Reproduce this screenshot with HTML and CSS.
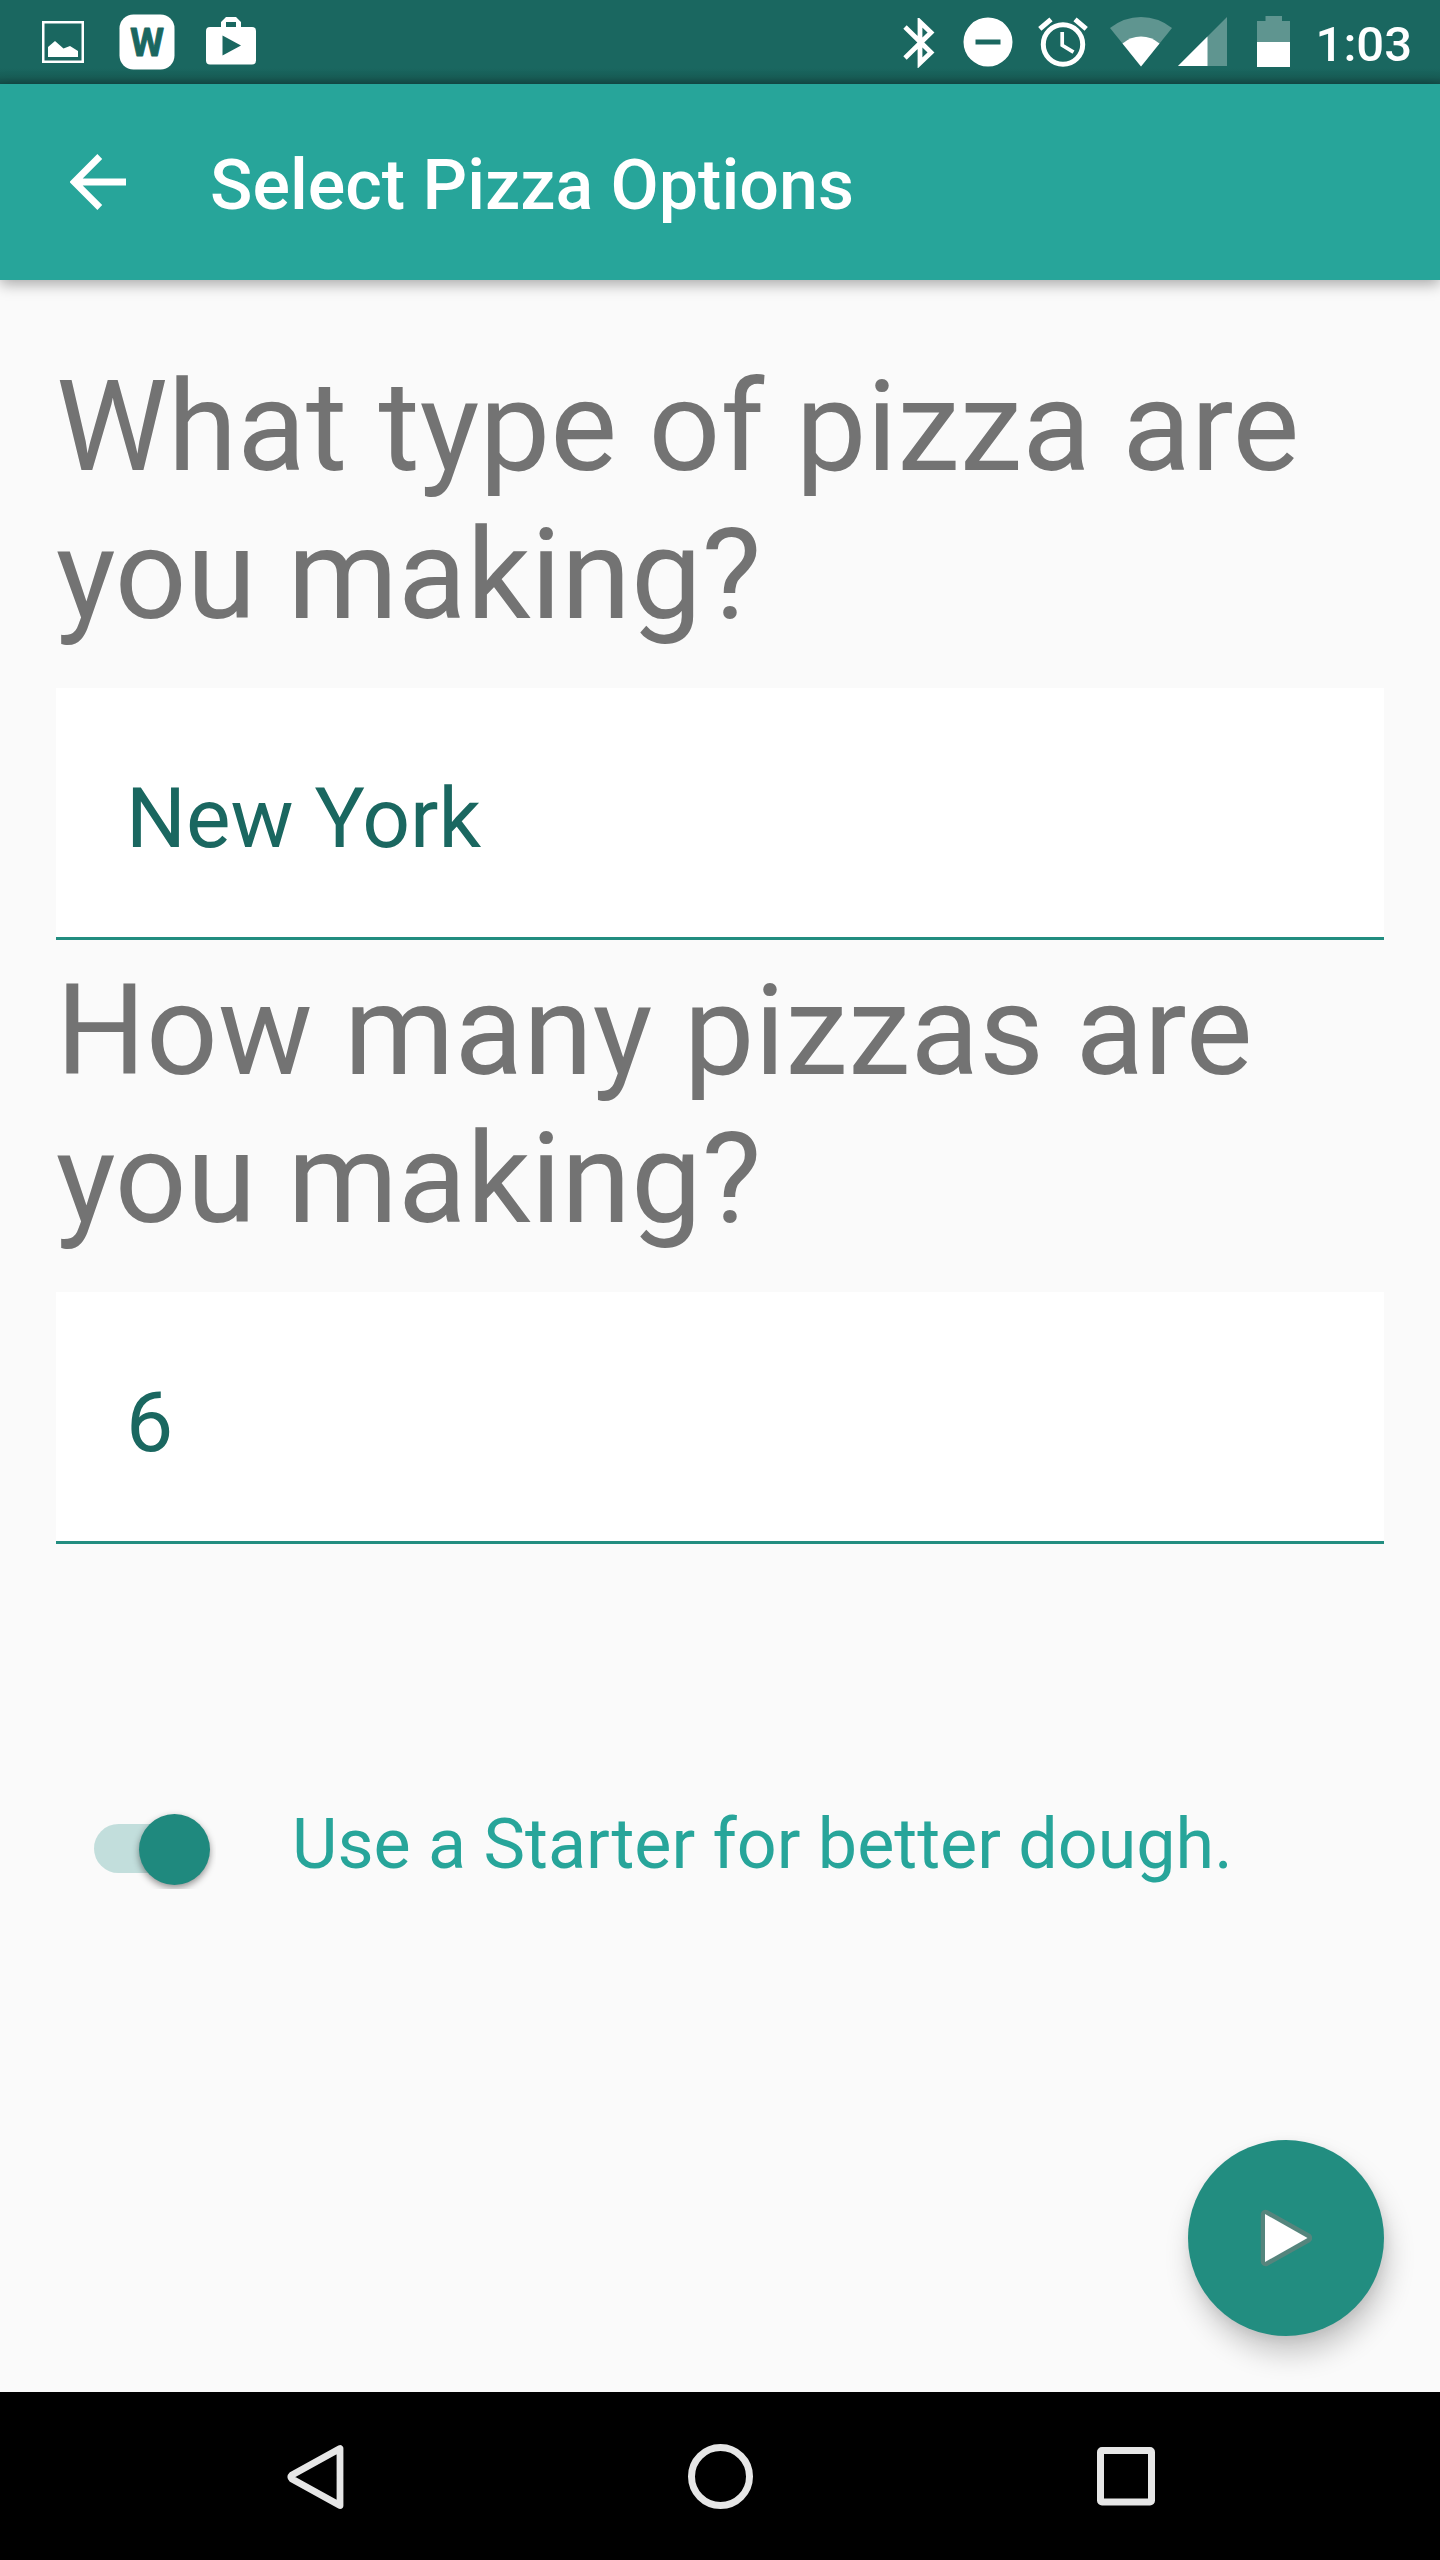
FILE: index.html
```html
<!DOCTYPE html>
<html lang="en">
<head>
<meta charset="utf-8">
<title>Select Pizza Options</title>
<link rel="stylesheet" href="styles.css">
</head>
<body>
<div class="screen">
  <div class="status-bar">
    <div class="notifications">
      <svg class="icon-image" width="42" height="42" viewBox="0 0 42 42"><rect x="1.25" y="1.25" width="39.5" height="39.5" fill="none" stroke="#fff" stroke-width="2.5"/><path d="M6 26 13 20 21.5 27.500 28 25 36 30V36H6z" fill="#fff"/></svg>
      <svg class="icon-w" width="56" height="56" viewBox="0 0 56 56"><rect x=".5" y=".5" width="55" height="55" rx="14" fill="#fff"/><text class="w-letter" x="28" y="42.200" text-anchor="middle">W</text></svg>
      <svg class="icon-store" width="50" height="48" viewBox="0 0 50 48"><path fill="#fff" fill-rule="evenodd" d="M4 10H15V5L20 0H30L35 5V10H46Q50 10 50 14V43.500Q50 47.500 46 47.500H4Q0 47.500 0 43.500V14Q0 10 4 10zM20 5V10H30V5zM16.500 18.500V38.500L35 28.500z"/></svg>
    </div>
    <div class="system">
      <svg class="icon-bluetooth" width="32" height="50" viewBox="0 0 32 50"><path d="M2 9 28 34.500 17 45V4L28 14.500 2 40" fill="none" stroke="#fff" stroke-width="4.800"/></svg>
      <svg class="icon-dnd" width="50" height="50" viewBox="0 0 50 50"><path fill="#fff" fill-rule="evenodd" d="M25 .5a24.500 24.500 0 0 1 0 49a24.500 24.500 0 0 1 0-49zM12.500 22.500V27.500H37.500V22.500z"/></svg>
      <svg class="icon-alarm" width="50" height="50" viewBox="0 0 50 50" fill="none" stroke="#fff"><circle cx="25" cy="27.500" r="19.700" stroke-width="5"/><path d="M1.800 11.800 13 2.300M48.200 11.800 37 2.300" stroke-width="5"/><path d="M24.200 15V28.300L35.500 35.200" stroke-width="3.700"/></svg>
      <svg class="icon-wifi" width="63" height="50" viewBox="0 0 63 50"><path d="M0 11Q14 0 31 0T62 11L31 49.500z" fill="#fff" opacity=".3"/><path d="M12.500 26.500Q20.500 19.500 31 19.500T49.500 26.500L31 49.500z" fill="#fff"/></svg>
      <svg class="icon-signal" width="49" height="50" viewBox="0 0 49 50"><path d="M49 0V49H0z" fill="#fff" opacity=".3"/><path d="M29.500 19.500V49H0z" fill="#fff"/></svg>
      <svg class="icon-battery" width="33" height="51" viewBox="0 0 33 51"><path d="M0 5H8.500V0H25V5H33V26H0z" fill="#fff" opacity=".3"/><path d="M0 26H33V51H0z" fill="#fff"/></svg>
      <span class="clock">1:03</span>
    </div>
  </div>
  <div class="app-bar">
    <svg class="back" width="56" height="56" viewBox="0 0 56 56"><path d="M56 28H6M28 2.500 2.500 28 28 53.500" transform="translate(1.800 0)" fill="none" stroke="#fff" stroke-width="6.800"/></svg>
    <h1 class="title">Select Pizza Options</h1>
  </div>
  <div class="content">
    <h2 class="question">What type of pizza are you making?</h2>
    <div class="field">New York</div>
    <h2 class="question">How many pizzas are you making?</h2>
    <div class="field">6</div>
    <div class="starter">
      <div class="switch"><span class="track"></span><span class="thumb"></span></div>
      <span class="starter-label">Use a Starter for better dough.</span>
    </div>
    <div class="fab">
      <svg width="52" height="58" viewBox="0 0 52 58"><path d="M5.500 5.500V52.500L47.500 29z" fill="#55857d" stroke="#55857d" stroke-width="9.500" stroke-linejoin="round"/><path d="M5 5V53L47.500 29z" fill="#fff"/></svg>
    </div>
  </div>
  <div class="nav-bar">
    <svg class="nav-back" width="57" height="66" viewBox="0 0 57 66"><path d="M53 4.500V61.500L5 35Q3 33 5 31z" fill="none" stroke="#e6e6e6" stroke-width="6.800" stroke-linejoin="round"/></svg>
    <svg class="nav-home" width="66" height="66" viewBox="0 0 66 66"><circle cx="32.500" cy="32.500" r="29" fill="none" stroke="#e6e6e6" stroke-width="7"/></svg>
    <svg class="nav-recent" width="58" height="59" viewBox="0 0 58 59"><rect x="3.500" y="3.500" width="51" height="51.400" rx="1.500" fill="none" stroke="#e6e6e6" stroke-width="7"/></svg>
  </div>
</div>
</body>
</html>
```

FILE: styles.css
```css
* { box-sizing: border-box; }
body { margin: 0; font-family: Roboto, "Noto Sans", sans-serif; }
svg { display: block; flex: none; }

.screen {
  width: 1440px;
  height: 2560px;
  display: flex;
  flex-direction: column;
  background: #fafafa;
  overflow: hidden;
}

.status-bar {
  height: 84px;
  flex: none;
  display: flex;
  justify-content: space-between;
  padding: 0 28px 0 42px;
  background: linear-gradient(#1a6760 0, #1a6760 68px, #185e57 77px, #144e49 84px);
}
.notifications, .system { display: flex; align-items: flex-start; }
.icon-image { margin-top: 21px; }
.icon-w { margin: 14px 0 0 35px; }
.icon-store { margin: 17px 0 0 31px; }
.w-letter {
  font: 700 39px Roboto, sans-serif;
  fill: #1a6760;
  stroke: #1a6760;
  stroke-width: .8px;
  stroke-linejoin: round;
}
.icon-bluetooth { margin-top: 18px; }
.icon-dnd { margin: 17px 0 0 28px; }
.icon-alarm { margin: 17px 0 0 25px; }
.icon-wifi { margin: 17px 0 0 22px; }
.icon-signal { margin: 17px 0 0 5px; }
.icon-battery { margin: 16px 0 0 30px; }
.clock {
  margin: 16px 0 0 26px;
  font-size: 49px;
  font-weight: 500;
  line-height: 58px;
  color: #fff;
}

.app-bar {
  position: relative;
  height: 196px;
  flex: none;
  display: flex;
  align-items: center;
  padding: 0 70px;
  background: #27a59a;
  box-shadow: 0 4px 14px rgba(0, 0, 0, .34);
}
.title {
  margin: 6px 0 0 84px;
  font-size: 70px;
  font-weight: 500;
  line-height: 82px;
  color: #fff;
}

.content {
  flex: 1;
  display: flex;
  flex-direction: column;
  padding: 73px 56px 56px;
}
.question {
  margin: 0 0 39px;
  font-size: 126px;
  font-weight: 400;
  line-height: 148px;
  letter-spacing: .07px;
  color: #737373;
}
.field {
  height: 252px;
  flex: none;
  margin-bottom: 17px;
  padding: 82px 70px 0;
  border-bottom: 3px solid #228d80;
  background: #fff;
  font-size: 84px;
  line-height: 98px;
  color: #1a6760;
}
.starter {
  display: flex;
  margin-top: 242px;
  padding-left: 38px;
}
.switch {
  position: relative;
  width: 122px;
  height: 86px;
  overflow: hidden;
}
.track {
  position: absolute;
  left: 0;
  top: 21px;
  width: 100px;
  height: 49px;
  border-radius: 25px;
  background: #c2dedc;
}
.thumb {
  position: absolute;
  left: 45px;
  top: 11px;
  width: 71px;
  height: 71px;
  border-radius: 50%;
  background: #1f897e;
  box-shadow: 0 3px 7px rgba(0, 0, 0, .42);
}
.starter-label {
  margin-left: 76px;
  font-size: 70px;
  line-height: 82px;
  color: #27a59a;
}
.fab {
  width: 196px;
  height: 196px;
  margin: auto 0 0 auto;
  display: flex;
  align-items: center;
  justify-content: center;
  border-radius: 50%;
  background: #228d80;
  box-shadow: 4px 18px 28px rgba(0, 0, 0, .2), 1px 4px 12px rgba(0, 0, 0, .08);
}

.nav-bar {
  height: 168px;
  flex: none;
  display: flex;
  align-items: center;
  padding: 1px 0 0 287px;
  background: #000;
}
.nav-home { margin-left: 344px; }
.nav-recent { margin-left: 343px; }
```
